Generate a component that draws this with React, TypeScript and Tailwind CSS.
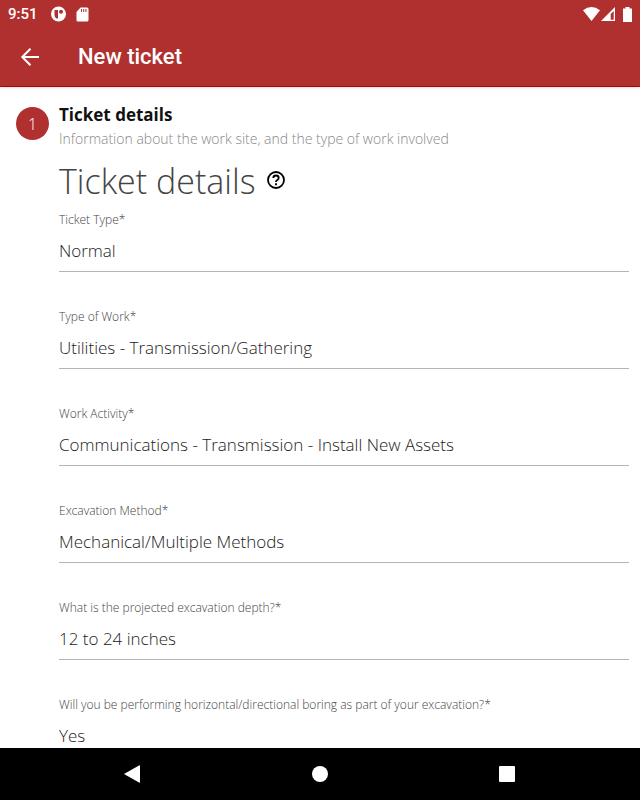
import React, { useState } from "react";

type FieldType = {
  id: string;
  label: string;
  options: string[];
};

const fields: FieldType[] = [
  { id: "ticketType", label: "Ticket Type*", options: ["Normal"] },
  { id: "workType", label: "Type of Work*", options: ["Utilities - Transmission/Gathering"] },
  { id: "workActivity", label: "Work Activity*", options: ["Communications - Transmission - Install New Assets"] },
  { id: "method", label: "Excavation Method*", options: ["Mechanical/Multiple Methods"] },
  { id: "depth", label: "What is the projected excavation depth?*", options: ["12 to 24 inches"] },
  {
    id: "boring",
    label: "Will you be performing horizontal/directional boring as part of your excavation?*",
    options: ["Yes"],
  },
];

const StatusBar = () => (
  <div className="flex h-7 items-center justify-between px-2 text-white">
    <div className="flex items-center">
      <span className="w-[43px] text-[15px] leading-5">9:51</span>
      <svg width="15" height="16" viewBox="0 0 15 16" aria-hidden="true">
        <circle cx="7.5" cy="8" r="7.5" fill="#fff" />
        <path d="M3.500 4H7V12.500H5.500Q3.500 11.500 3.500 9z" fill="#b03030" />
        <circle cx="10" cy="5.800" r="2" fill="#b03030" />
      </svg>
      <svg className="ml-[10px]" width="13" height="15" viewBox="0 0 13 15" aria-hidden="true">
        <path d="M4.500.5H11Q12.500.5 12.500 2V13Q12.500 14.500 11 14.500H2Q.5 14.500.5 13V5z" fill="#fff" />
        <path d="M5.500 2v3M7.700 2v3M9.900 2v3" stroke="#b03030" strokeWidth="1" />
      </svg>
    </div>
    <div className="flex items-center">
      <svg width="17" height="14" viewBox="0 0 17 14" fill="#fff" aria-hidden="true">
        <path d="M0 3.200Q8.500-3 17 3.200L8.500 14z" />
      </svg>
      <svg className="ml-px" width="14" height="14" viewBox="0 0 14 14" aria-hidden="true">
        <path d="M14 0v14H0z" fill="#fff" />
        <path d="M12.700 4v8.800H9.700V7z" fill="#b03030" />
      </svg>
      <svg className="ml-2" width="9" height="15" viewBox="0 0 9 15" fill="#fff" aria-hidden="true">
        <path d="M2.500 0h4v1.500H9V15H0V1.500h2.500z" />
      </svg>
    </div>
  </div>
);

const SelectField = ({ field }: { field: FieldType }) => {
  const [value, setValue] = useState(field.options[0]);

  return (
    <div className="mb-[37px] flex flex-col">
      <label htmlFor={field.id} className="text-xs leading-4 text-[#444444]">
        {field.label}
      </label>
      <select
        id={field.id}
        value={value}
        onChange={(e) => setValue(e.target.value)}
        className="h-11 w-full appearance-none border-b border-[#b5b5b5] bg-transparent pt-0.5 text-[17px] text-[#222222] outline-none"
      >
        {field.options.map((option) => (
          <option key={option}>{option}</option>
        ))}
      </select>
    </div>
  );
};

const App = () => {
  return (
    <div className="flex h-screen flex-col bg-white font-['Open_Sans',sans-serif] font-light">
      <header className="shrink-0 border-b border-[#a80808] bg-[#b03030] font-[Roboto,sans-serif] font-medium shadow-sm">
        <StatusBar />
        <div className="flex h-[58px] items-center pl-5 text-white">
          <button type="button" aria-label="Back" className="w-[58px]">
            <svg width="20" height="20" viewBox="0 0 20 20" fill="none" stroke="#fff" strokeWidth="2" aria-hidden="true">
              <path d="M19 10H2M10.500 1.800L2.300 10l8.200 8.200" />
            </svg>
          </button>
          <h1 className="text-[22px] leading-7">New ticket</h1>
        </div>
      </header>

      <main className="flex min-h-0 flex-1 items-start gap-[10px] overflow-hidden pt-4 pr-[11px] pl-4">
        <div className="mt-1 flex size-[33px] shrink-0 items-center justify-center rounded-full bg-[#b03030] text-base text-white">
          1
        </div>
        <div className="min-w-0 flex-1">
          <h2 className="text-[17px] leading-6 font-bold text-[#111111]">Ticket details</h2>
          <p className="text-sm leading-6 text-[#888888]">
            Information about the work site, and the type of work involved
          </p>
          <div className="mt-2 mb-2 flex items-center gap-[10px]">
            <h3 className="text-[34px] leading-[45px] text-[#444444]">Ticket details</h3>
            <button type="button" aria-label="Help" className="mb-1">
              <svg width="20" height="20" viewBox="0 0 20 20" fill="none" stroke="#000" aria-hidden="true">
                <circle cx="10" cy="10" r="8" strokeWidth="1.800" />
                <path d="M7.300 8Q7.300 5.500 10 5.500T12.700 7.900Q12.700 9.100 11.300 10T10 12" strokeWidth="1.800" />
                <path d="M10 13.300v1.900" strokeWidth="1.900" />
              </svg>
            </button>
          </div>
          <form>
            {fields.map((field) => (
              <SelectField key={field.id} field={field} />
            ))}
          </form>
        </div>
      </main>

      <nav className="flex h-[52px] shrink-0 items-center justify-around bg-black pr-10 pl-[38px]">
        <button type="button" aria-label="Back">
          <svg width="17" height="18" viewBox="0 0 17 18" fill="#fff" aria-hidden="true">
            <path d="M0 9L15 .5q1-.5 1 .5v16q0 1-1 .5z" />
          </svg>
        </button>
        <button type="button" aria-label="Home" className="size-4 rounded-full bg-white" />
        <button type="button" aria-label="Recent apps" className="size-4 rounded-[1px] bg-white" />
      </nav>
    </div>
  );
};

export default App;
